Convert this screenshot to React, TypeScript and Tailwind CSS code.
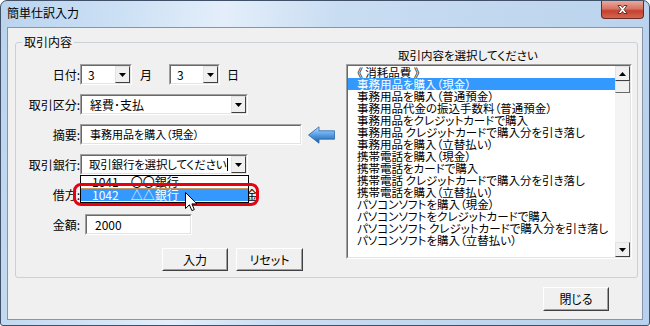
import React from "react";

const items = [
  "《 消耗品費 》",
  "事務用品を購入（現金）",
  "事務用品を購入（普通預金）",
  "事務用品代金の振込手数料（普通預金）",
  "事務用品をクレジットカードで購入",
  "事務用品 クレジットカードで購入分を引き落し",
  "事務用品を購入（立替払い）",
  "携帯電話を購入（現金）",
  "携帯電話をカードで購入",
  "携帯電話 クレジットカードで購入分を引き落し",
  "携帯電話を購入（立替払い）",
  "パソコンソフトを購入（現金）",
  "パソコンソフトをクレジットカードで購入",
  "パソコンソフト クレジットカードで購入分を引き落し",
  "パソコンソフトを購入（立替払い）",
];

type Props = { className?: string; children?: React.ReactNode };

// sunken edit / combo frame
function Sunken({ className = "", children }: Props) {
  return (
    <div className={"h-[21px] border border-t-[#a0a0a0] border-l-[#a0a0a0] border-r-white border-b-white " + className}>
      <div className="flex h-full items-center overflow-hidden border border-t-[#696969] border-l-[#696969] border-r-[#e3e3e3] border-b-[#e3e3e3] bg-white">
        {children}
      </div>
    </div>
  );
}

function Arrow({ up = false }: { up?: boolean }) {
  return (
    <svg width="7" height="4" viewBox="0 0 7 4">
      <path d={up ? "M3.5 0L7 4H0z" : "M0 0h7L3.5 4z"} fill="#000" />
    </svg>
  );
}

function DropButton() {
  return (
    <div className="ml-auto flex h-full w-[15px] shrink-0 items-center justify-center border border-t-[#e3e3e3] border-l-[#e3e3e3] border-r-[#404040] border-b-[#404040] bg-[#f0f0f0]">
      <Arrow />
    </div>
  );
}

function Button({ className = "", children }: Props) {
  return (
    <div className={"border border-t-white border-l-white border-r-[#404040] border-b-[#404040] bg-[#f0f0f0] " + className}>
      <div className="flex h-full items-center justify-center border border-t-[#f0f0f0] border-l-[#f0f0f0] border-r-[#a0a0a0] border-b-[#a0a0a0] text-[12px]">
        {children}
      </div>
    </div>
  );
}

function Row({ label, children }: { label: string; children?: React.ReactNode }) {
  return (
    <div className="flex h-[21px] items-center">
      <div className="w-[64px] shrink-0 text-right text-[12px]">{label}</div>
      {children}
    </div>
  );
}

function ScrollButton({ up = false }: { up?: boolean }) {
  return (
    <div className="flex h-[15px] w-[15px] items-center justify-center border border-t-[#e3e3e3] border-l-[#e3e3e3] border-r-[#404040] border-b-[#404040] bg-[#f0f0f0]">
      <Arrow up={up} />
    </div>
  );
}

export default function App() {
  return (
    <div className="h-[326px] w-[650px] font-['Noto_Sans_CJK_JP','Noto_Sans',sans-serif] text-black [font-feature-settings:'palt']">
      <div className="flex h-full flex-col rounded-t-[7px] rounded-b-[3px] border border-[#3f5068] bg-[linear-gradient(100deg,#bad3ed_0%,#cde1f5_18%,#e4eefa_32%,#c9ddf2_48%,#b8d1ec_100%)]">
        {/* title bar */}
        <div className="flex h-[26px] shrink-0 items-start">
          <div className="mt-[5px] pl-[6px] text-[12px] leading-[14px]">簡単仕訳入力</div>
          <div className="ml-auto mr-[5px] flex h-[18px] w-[43px] items-center justify-center rounded-b-[4px] border border-t-0 border-[#6b2a22] bg-[linear-gradient(180deg,#eaa99a_0%,#d67563_45%,#c4402f_58%,#d3664f_100%)]">
            <svg width="11" height="9" viewBox="0 0 11 9">
              <path
                d="M1 0.5H4L5.5 2.6L7 0.5H10L7 4.5L10 8.5H7L5.5 6.4L4 8.5H1L4 4.5Z"
                fill="#fff"
                stroke="#4a1a14"
                strokeWidth="0.8"
              />
            </svg>
          </div>
        </div>

        {/* client area */}
        <div className="mx-[6px] mb-[5px] flex flex-1 flex-col border border-[#8396af] bg-[#f0f0f0]">
          <fieldset className="ml-[7px] mt-[7px] h-[243px] w-[623px] rounded-[3px] border border-[#c9d0d6]">
            <legend className="ml-[6px] px-[2px] text-[12px] leading-[14px]">取引内容</legend>
            <div className="flex">
              {/* left form */}
              <div className="relative flex w-[330px] flex-col gap-[9px] pt-[15px] text-[12px]">
                <Row label="日付:">
                  <Sunken className="w-[52px]">
                    <span className="pl-[6px]">3</span>
                    <DropButton />
                  </Sunken>
                  <span className="ml-[8px]">月</span>
                  <Sunken className="ml-[17px] w-[51px]">
                    <span className="pl-[6px]">3</span>
                    <DropButton />
                  </Sunken>
                  <span className="ml-[7px]">日</span>
                </Row>
                <Row label="取引区分:">
                  <Sunken className="w-[168px]">
                    <span className="pl-[8px]">経費･支払</span>
                    <DropButton />
                  </Sunken>
                </Row>
                <Row label="摘要:">
                  <Sunken className="w-[222px]">
                    <span className="pl-[8px] text-[11px]">事務用品を購入（現金）</span>
                  </Sunken>
                  <svg className="ml-[6px]" width="27" height="18" viewBox="0 0 27 18">
                    <defs>
                      <linearGradient id="arrowFill" x1="0" y1="0" x2="0" y2="1">
                        <stop offset="0" stopColor="#bfe0ff" />
                        <stop offset="0.45" stopColor="#5ea4ea" />
                        <stop offset="1" stopColor="#1a58a6" />
                      </linearGradient>
                    </defs>
                    <path d="M0.5 9L11 0.8V4.8H26.5V13.2H11V17.2Z" fill="url(#arrowFill)" stroke="#2a64a8" strokeWidth="0.8" />
                  </svg>
                </Row>
                <Row label="取引銀行:">
                  <Sunken className="w-[168px]">
                    <span className="whitespace-nowrap pl-[7px] text-[11.5px] tracking-[-0.2px]">取引銀行を選択してください</span>
                    <span className="ml-[1px] h-[13px] w-[1px] shrink-0 bg-black" />
                    <DropButton />
                  </Sunken>
                </Row>
                <Row label="借方:">
                  <Sunken className="w-[148px]">
                    <DropButton />
                  </Sunken>
                  <span className="ml-[6px]">現金</span>
                </Row>
                <Row label="金額:">
                  <Sunken className="ml-[5px] w-[107px]">
                    <span className="pl-[8px]">2000</span>
                  </Sunken>
                </Row>
                <div className="mt-[4px] flex gap-[8px] pl-[146px]">
                  <Button className="h-[23px] w-[66px]">入力</Button>
                  <Button className="h-[23px] w-[67px]">リセット</Button>
                </div>

                {/* open drop-down of 取引銀行 */}
                <div className="absolute left-[64px] top-[126px] h-[28px] w-[169px] overflow-hidden border border-black bg-white">
                  <div className="-mt-[4px] flex h-[16px] items-end pl-[11px] leading-[13px]">1041　〇〇銀行</div>
                  <div className="flex h-[13px] items-center border-t border-t-[#c8965e] bg-[#3399ff] pl-[11px] leading-[12px] text-white">
                    1042　△△銀行
                  </div>
                </div>
                {/* red marker */}
                <div className="absolute left-[57px] top-[134px] h-[23px] w-[186px] rounded-[8px] border-[3px] border-[#e60012]" />
                {/* mouse cursor */}
                <svg className="absolute left-[169px] top-[143px]" width="13" height="20" viewBox="0 0 13 20">
                  <path
                    d="M0.5 0.5V16.5L4.4 12.8L6.9 18.6L9.3 17.6L6.9 11.9H12Z"
                    fill="#fff"
                    stroke="#000"
                    strokeWidth="1"
                  />
                </svg>
              </div>

              {/* right list */}
              <div className="flex w-[286px] flex-col">
                <div className="pl-[52px] text-[11.5px] leading-[12px]">取引内容を選択してください</div>
                <div className="mt-[3px] h-[195px] border border-t-[#a0a0a0] border-l-[#a0a0a0] border-r-white border-b-white">
                  <div className="flex h-full border border-t-[#696969] border-l-[#696969] border-r-[#e3e3e3] border-b-[#e3e3e3] bg-white">
                    <div className="w-[267px] overflow-hidden">
                      {items.map((t, i) => (
                        <div
                          key={t}
                          className={
                            i === 1
                              ? "h-[12px] whitespace-nowrap bg-[#3399ff] pl-[9px] text-[11.5px] leading-[12px] text-white"
                              : "h-[12px] whitespace-nowrap pl-[9px] text-[11.5px] leading-[12px]"
                          }
                        >
                          {t}
                        </div>
                      ))}
                    </div>
                    <div className="flex w-[15px] flex-col bg-[#f4f4f4]">
                      <ScrollButton up />
                      <div className="h-[12px] border border-t-[#e3e3e3] border-l-[#e3e3e3] border-r-[#696969] border-b-[#696969] bg-[#f0f0f0]" />
                      <div className="flex-1" />
                      <ScrollButton />
                    </div>
                  </div>
                </div>
              </div>
            </div>
          </fieldset>

          <div className="mt-[9px] flex justify-end pr-[33px]">
            <Button className="h-[24px] w-[66px]">閉じる</Button>
          </div>
        </div>
      </div>
    </div>
  );
}
